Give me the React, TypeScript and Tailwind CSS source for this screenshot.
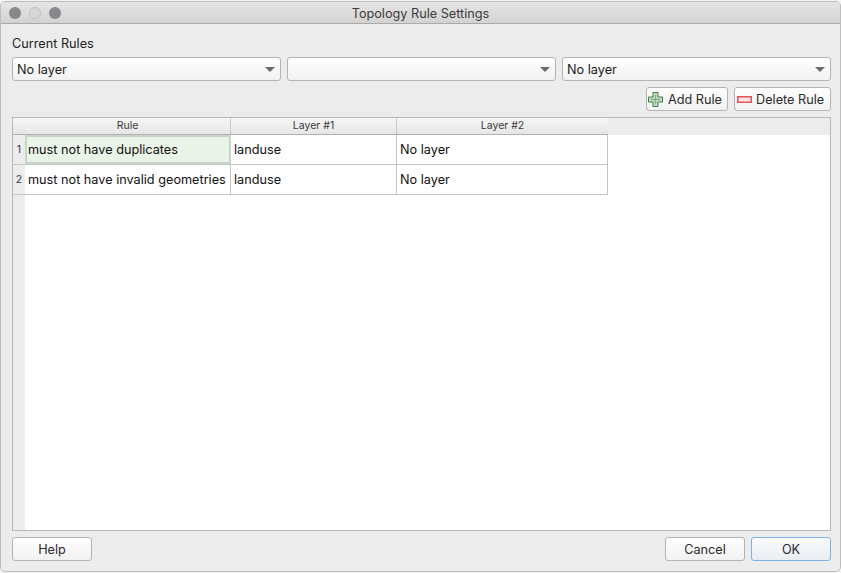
const font = "font-['Inter','Liberation_Sans',sans-serif]";

function Combo({ label, className }: { label: string; className: string }) {
  return (
    <div
      className={`flex h-[24px] items-center justify-between rounded-[3px] border border-[#b4b4b4] bg-gradient-to-b from-[#ffffff] to-[#f1f1f1] pl-[4px] pr-[5px] text-[12.7px] text-[#1c1c1c] ${className}`}
    >
      <span className="pt-[1px]">{label}</span>
      <svg width="10" height="5" viewBox="0 0 10 5" className="mr-[0.5px]">
        <path d="M0 0H10L5 5Z" fill="#6b6b6b" />
      </svg>
    </div>
  );
}

function Button({
  children,
  className = "",
  primary = false,
}: {
  children: React.ReactNode;
  className?: string;
  primary?: boolean;
}) {
  return (
    <button
      className={`flex h-[24px] items-center rounded-[3px] border bg-gradient-to-b pt-[1px] text-[12.7px] text-[#2a2a2a] ${
        primary
          ? "border-[#7eb3ea] from-[#f8fafd] to-[#e9edf2]"
          : "border-[#b4b4b4] from-[#ffffff] to-[#f1f1f1]"
      } ${className}`}
    >
      {children}
    </button>
  );
}

function PlusIcon() {
  return (
    <svg width="15" height="15" viewBox="0 0 15 15" className="mr-[5px] -mt-[1px]">
      <path
        d="M5 .5H10V5H14.5V10H10V14.5H5V10H.5V5H5Z"
        fill="#cfe4cf"
        stroke="#3b7a46"
        strokeWidth="1"
      />
      <path d="M7.5 2.5V12.5M2.5 7.5H12.5" stroke="#7fb584" strokeWidth="1.5" />
    </svg>
  );
}

function MinusIcon() {
  return (
    <svg width="15" height="7" viewBox="0 0 15 7" className="mr-[4px] -mt-[1px]">
      <rect x="0.75" y="0.75" width="13.5" height="5.5" fill="#f9e4e4" stroke="#e2545a" strokeWidth="1.5" />
    </svg>
  );
}

function HeaderCell({ label, className }: { label: string; className: string }) {
  return (
    <div
      className={`flex h-full items-center justify-center border-r border-[#c8c8c8] text-[10.5px] text-[#3a3a3a] ${className}`}
    >
      {label}
    </div>
  );
}

const rows = [
  { n: 1, rule: "must not have duplicates", selected: true },
  { n: 2, rule: "must not have invalid geometries", selected: false },
];

export default function App() {
  return (
    <div className={`h-[573px] w-[841px] overflow-hidden bg-[#f4f4f4] pt-[1px] ${font}`}>
      <div className="flex h-[571px] flex-col overflow-hidden rounded-[5px] border border-[#bdbdbd] bg-[#ececec]">
        <div className="relative flex h-[22px] shrink-0 items-center justify-center border-b border-[#a9a9a9] bg-gradient-to-b from-[#e6e6e6] to-[#d2d2d2] pt-[2px] text-[12.7px] text-[#3c3c3c]">
          <div className="absolute left-[8px] top-[5px] flex gap-[8px]">
            <span className="h-[12px] w-[12px] rounded-full bg-[#88888c]" />
            <span className="h-[12px] w-[12px] rounded-full border border-[#c4c4c4] bg-[#d6d6d6]" />
            <span className="h-[12px] w-[12px] rounded-full bg-[#88888c]" />
          </div>
          Topology Rule Settings
        </div>

        <div className="flex flex-1 flex-col pl-[11px] pr-[9px] pb-[10px]">
          <div className="flex h-[33px] items-end pb-[4px] text-[12.7px] text-[#222222]">Current Rules</div>

          <div className="flex gap-[6px]">
            <Combo label="No layer" className="w-[269px]" />
            <Combo label="" className="w-[269px]" />
            <Combo label="No layer" className="w-[269px]" />
          </div>

          <div className="mt-[6px] flex justify-end gap-[6px]">
            <Button className="w-[82px] pl-[1px]">
              <PlusIcon />
              Add Rule
            </Button>
            <Button className="w-[97px] pl-[2px]">
              <MinusIcon />
              Delete Rule
            </Button>
          </div>

          <div className="mt-[6px] flex min-h-0 flex-1 flex-col border border-[#b8b8b8] bg-white">
            <div className="flex h-[17px] shrink-0 bg-[#ececec]">
              <div className="flex h-full border-b border-[#b0b0b0] bg-gradient-to-b from-[#f6f6f6] to-[#e6e6e6]">
                <div className="h-full w-[12px]" />
                <HeaderCell label="Rule" className="w-[206px]" />
                <HeaderCell label="Layer #1" className="w-[166px]" />
                <HeaderCell label="Layer #2" className="w-[211px] border-r-0" />
              </div>
            </div>

            <div className="flex min-h-0 flex-1">
              <div className="w-[12px] shrink-0 bg-[#ececec]">
                {rows.map((row) => (
                  <div
                    key={row.n}
                    className="flex h-[30px] items-center justify-center border-b border-[#c8c8c8] text-[10.5px] text-[#3a3a3a]"
                  >
                    {row.n}
                  </div>
                ))}
              </div>

              <div className="flex flex-col">
                {rows.map((row) => (
                  <div
                    key={row.n}
                    className="flex h-[30px] border-b border-[#c4c4c4] text-[12.7px] text-[#111111]"
                  >
                    <div
                      className={`flex w-[206px] items-center whitespace-nowrap ${
                        row.selected
                          ? "border-2 border-[#c8d6c8] bg-[#e9f3e7] pl-[1px]"
                          : "border-r border-[#c4c4c4] pl-[3px]"
                      }`}
                    >
                      {row.rule}
                    </div>
                    <div className="flex w-[166px] items-center border-r border-[#c4c4c4] pl-[3px]">landuse</div>
                    <div className="flex w-[211px] items-center border-r border-[#c4c4c4] pl-[3px]">No layer</div>
                  </div>
                ))}
              </div>
            </div>
          </div>

          <div className="mt-[6px] flex justify-between">
            <Button className="w-[80px] justify-center">Help</Button>
            <div className="flex gap-[6px]">
              <Button className="w-[80px] justify-center">Cancel</Button>
              <Button primary className="w-[80px] justify-center">
                OK
              </Button>
            </div>
          </div>
        </div>
      </div>
    </div>
  );
}
